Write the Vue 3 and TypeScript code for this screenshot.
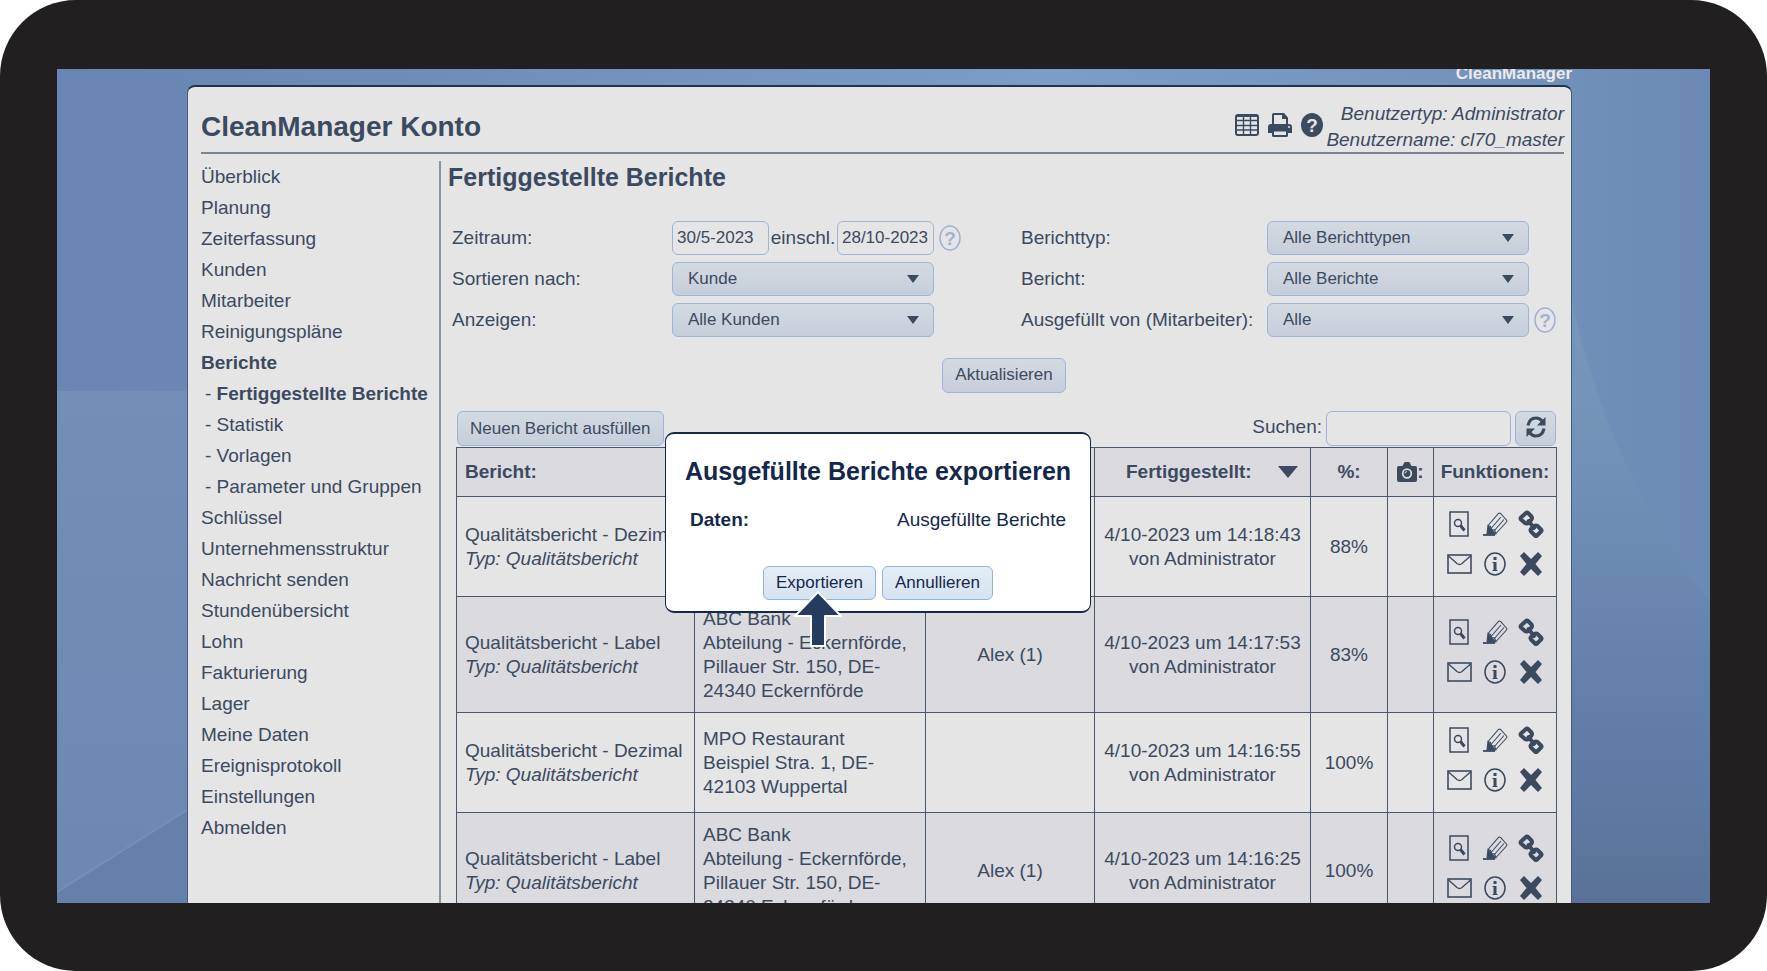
<script setup lang="ts">
import { ref } from 'vue'

interface NavItem {
  label: string
  sub?: boolean
  active?: boolean
}

interface Report {
  name: string
  type: string
  customer: string
  address: string
  employee: string
  date: string
  by: string
  score: string
}

const navItems: NavItem[] = [
  { label: 'Überblick' },
  { label: 'Planung' },
  { label: 'Zeiterfassung' },
  { label: 'Kunden' },
  { label: 'Mitarbeiter' },
  { label: 'Reinigungspläne' },
  { label: 'Berichte', active: true },
  { label: 'Fertiggestellte Berichte', sub: true, active: true },
  { label: 'Statistik', sub: true },
  { label: 'Vorlagen', sub: true },
  { label: 'Parameter und Gruppen', sub: true },
  { label: 'Schlüssel' },
  { label: 'Unternehmensstruktur' },
  { label: 'Nachricht senden' },
  { label: 'Stundenübersicht' },
  { label: 'Lohn' },
  { label: 'Fakturierung' },
  { label: 'Lager' },
  { label: 'Meine Daten' },
  { label: 'Ereignisprotokoll' },
  { label: 'Einstellungen' },
  { label: 'Abmelden' },
]

const bank = {
  customer: 'ABC Bank',
  address: 'Abteilung - Eckernförde, Pillauer Str. 150, DE-24340 Eckernförde',
  employee: 'Alex (1)',
}

const reports: Report[] = [
  {
    name: 'Qualitätsbericht - Dezimal',
    type: 'Qualitätsbericht',
    customer: '',
    address: '',
    employee: '',
    date: '4/10-2023 um 14:18:43',
    by: 'von Administrator',
    score: '88%',
  },
  {
    name: 'Qualitätsbericht - Label',
    type: 'Qualitätsbericht',
    ...bank,
    date: '4/10-2023 um 14:17:53',
    by: 'von Administrator',
    score: '83%',
  },
  {
    name: 'Qualitätsbericht - Dezimal',
    type: 'Qualitätsbericht',
    customer: 'MPO Restaurant',
    address: 'Beispiel Stra. 1, DE-42103 Wuppertal',
    employee: '',
    date: '4/10-2023 um 14:16:55',
    by: 'von Administrator',
    score: '100%',
  },
  {
    name: 'Qualitätsbericht - Label',
    type: 'Qualitätsbericht',
    ...bank,
    date: '4/10-2023 um 14:16:25',
    by: 'von Administrator',
    score: '100%',
  },
]

const from = ref('30/5-2023')
const until = ref('28/10-2023')
const search = ref('')
</script>

<template>
  <div class="device">
    <div class="screen">
      <svg class="backdrop" viewBox="0 0 1653 834" preserveAspectRatio="none" aria-hidden="true">
        <defs>
          <linearGradient id="sky" x1="0" y1="0" x2="1" y2="0">
            <stop offset="0" stop-color="#6985b3" />
            <stop offset="0.2" stop-color="#6e8cb7" />
            <stop offset="0.6" stop-color="#7b9dc8" />
            <stop offset="0.92" stop-color="#7190b9" />
            <stop offset="1" stop-color="#6b89b2" />
          </linearGradient>
          <linearGradient id="glow" x1="0" y1="0" x2="0" y2="1">
            <stop offset="0" stop-color="#7899bb" />
            <stop offset="0.35" stop-color="#7291b8" />
            <stop offset="0.6" stop-color="#6684ad" />
            <stop offset="0.8" stop-color="#5f7ba5" />
            <stop offset="1" stop-color="#5a7299" />
          </linearGradient>
          <linearGradient id="haze" x1="0" y1="0" x2="0" y2="1">
            <stop offset="0" stop-color="#728fb8" />
            <stop offset="1" stop-color="#6a88b1" />
          </linearGradient>
        </defs>
        <rect width="1653" height="834" fill="url(#sky)" />
        <path d="M0 322H700V834H0z" fill="url(#haze)" />
        <path d="M0 823L130 741L700 400V834H0z" fill="#6580ab" />
        <path d="M0 823L130 741" stroke="#7590b5" stroke-width="2" />
        <path d="M1500 160C1530 330 1575 430 1653 533V834H1400V160z" fill="url(#glow)" />
      </svg>

      <div class="brand">CleanManager</div>

      <div class="panel">
        <header class="top">
          <h1>CleanManager Konto</h1>
          <div class="tools">
            <button type="button" aria-label="Tabelle">
              <svg width="24" height="22" viewBox="0 0 24 22" fill="none" stroke="currentColor" stroke-width="2">
                <rect x="1" y="1" width="22" height="20" rx="2" />
                <path d="M1 6.500h22M1 11.500h22M1 16h22M8.500 3v18M15.500 3v18" stroke-width="1.400" />
                <path d="M2 2h20" />
              </svg>
            </button>
            <button type="button" aria-label="Drucken">
              <svg width="24" height="24" viewBox="0 0 24 24">
                <path d="M4 12V1.500Q4 0 5.500 0H16l4 4.500V12z" fill="currentColor" />
                <path d="M6 12V2h8v4h4v6z" fill="#e5e5e5" />
                <path d="M3 11h18q3 0 3 3v6h-4v-3H4v3H0v-6q0-3 3-3z" fill="currentColor" />
                <path d="M4 17h16v5.500q0 1.500-1.500 1.500h-13Q4 24 4 22.500z" fill="currentColor" />
                <path d="M6 18.500h12V22H6z" fill="#e5e5e5" />
                <circle cx="21" cy="14" r="1" fill="#e5e5e5" />
              </svg>
            </button>
            <button type="button" aria-label="Hilfe">
              <svg width="22" height="24" viewBox="0 0 22 24">
                <ellipse cx="11" cy="12" rx="11" ry="12" fill="currentColor" />
                <text x="11" y="19" text-anchor="middle" class="mark light">?</text>
              </svg>
            </button>
          </div>
          <div class="user">
            <div>Benutzertyp: Administrator</div>
            <div>Benutzername: cl70_master</div>
          </div>
        </header>

        <div class="body">
          <nav>
            <ul>
              <li v-for="item in navItems" :key="item.label" :class="{ sub: item.sub }">
                <template v-if="item.sub">- </template>
                <a href="#" :class="{ active: item.active }">{{ item.label }}</a>
              </li>
            </ul>
          </nav>

          <main>
            <h2>Fertiggestellte Berichte</h2>

            <form class="filters" @submit.prevent>
              <label for="from">Zeitraum:</label>
              <div class="field">
                <span class="range">
                  <input id="from" v-model="from" type="text" class="date" />
                  <label for="until">einschl.</label>
                  <input id="until" v-model="until" type="text" class="date" />
                </span>
                <svg class="help" width="22" height="26" viewBox="0 0 22 26">
                  <ellipse cx="11" cy="13" rx="10" ry="12" />
                  <text x="11" y="20" text-anchor="middle" class="mark">?</text>
                </svg>
              </div>
              <label for="type">Berichttyp:</label>
              <div class="field">
                <span class="drop">
                  <select id="type"><option>Alle Berichttypen</option></select>
                  <svg width="12" height="8" viewBox="0 0 12 8"><path d="M0 0h12L6 8z" /></svg>
                </span>
              </div>

              <label for="sort">Sortieren nach:</label>
              <div class="field">
                <span class="drop">
                  <select id="sort"><option>Kunde</option></select>
                  <svg width="12" height="8" viewBox="0 0 12 8"><path d="M0 0h12L6 8z" /></svg>
                </span>
              </div>
              <label for="report">Bericht:</label>
              <div class="field">
                <span class="drop">
                  <select id="report"><option>Alle Berichte</option></select>
                  <svg width="12" height="8" viewBox="0 0 12 8"><path d="M0 0h12L6 8z" /></svg>
                </span>
              </div>

              <label for="show">Anzeigen:</label>
              <div class="field">
                <span class="drop">
                  <select id="show"><option>Alle Kunden</option></select>
                  <svg width="12" height="8" viewBox="0 0 12 8"><path d="M0 0h12L6 8z" /></svg>
                </span>
              </div>
              <label for="staff">Ausgefüllt von (Mitarbeiter):</label>
              <div class="field">
                <span class="drop">
                  <select id="staff"><option>Alle</option></select>
                  <svg width="12" height="8" viewBox="0 0 12 8"><path d="M0 0h12L6 8z" /></svg>
                </span>
                <svg class="help" width="22" height="26" viewBox="0 0 22 26">
                  <ellipse cx="11" cy="13" rx="10" ry="12" />
                  <text x="11" y="20" text-anchor="middle" class="mark">?</text>
                </svg>
              </div>

              <div class="submit"><button type="submit" class="btn">Aktualisieren</button></div>
            </form>

            <div class="toolbar">
              <button type="button" class="btn">Neuen Bericht ausfüllen</button>
              <div class="search">
                <label for="search">Suchen:</label>
                <input id="search" v-model="search" type="text" />
                <button type="button" class="btn refresh" aria-label="Neu laden">
                  <svg width="20" height="22" viewBox="0 0 20 22">
                    <g fill="none" stroke="currentColor" stroke-width="3.200">
                      <path d="M2 9.500C3 4.500 6 2 10 2c3 0 5 1.500 6.500 3.500" />
                      <path d="M18 12.500C17 17.500 14 20 10 20c-3 0-5-1.500-6.500-3.500" />
                    </g>
                    <path d="M19.500 1v8.500H11zM.5 21v-8.500H9z" fill="currentColor" />
                  </svg>
                </button>
              </div>
            </div>

            <table>
              <colgroup>
                <col class="c-report" />
                <col class="c-place" />
                <col class="c-staff" />
                <col class="c-date" />
                <col class="c-score" />
                <col class="c-photo" />
                <col class="c-tools" />
              </colgroup>
              <thead>
                <tr>
                  <th class="left">Bericht:</th>
                  <th></th>
                  <th></th>
                  <th>
                    <button type="button" class="sort">
                      Fertiggestellt:
                      <svg width="20" height="12" viewBox="0 0 20 12"><path d="M0 0h20L10 12z" fill="currentColor" /></svg>
                    </button>
                  </th>
                  <th>%:</th>
                  <th>
                    <span class="photo">
                      <svg width="20" height="20" viewBox="0 0 20 20">
                        <path d="M2 4h3.500L7 1q.3-1 1.500-1h3q1.200 0 1.500 1l1.500 3H18q2 0 2 2v12q0 2-2 2H2q-2 0-2-2V6q0-2 2-2z" fill="currentColor" />
                        <circle cx="10" cy="11.500" r="4.300" fill="currentColor" stroke="#dadadf" stroke-width="1.800" />
                        <path d="M8 11.500q0-2 2-2" fill="none" stroke="#dadadf" />
                      </svg>:
                    </span>
                  </th>
                  <th>Funktionen:</th>
                </tr>
              </thead>
              <tbody>
                <tr v-for="r in reports" :key="r.date" :class="{ tall: r.employee }">
                  <td>
                    {{ r.name }}<br /><em>Typ: {{ r.type }}</em>
                  </td>
                  <td>
                    <template v-if="r.customer">{{ r.customer }}<br />{{ r.address }}</template>
                  </td>
                  <td class="mid">{{ r.employee }}</td>
                  <td class="mid">{{ r.date }}<br />{{ r.by }}</td>
                  <td class="mid">{{ r.score }}</td>
                  <td></td>
                  <td>
                    <div class="actions">
                      <button type="button" aria-label="Ansehen">
                        <svg width="24" height="26" viewBox="0 0 24 26" fill="none" stroke="currentColor">
                          <rect x="3" y="1" width="18" height="24" stroke-width="1.500" />
                          <circle cx="11" cy="12" r="3.500" stroke-width="1.500" />
                          <path d="M13.500 14.500l4 5" stroke-width="3" />
                        </svg>
                      </button>
                      <button type="button" aria-label="Bearbeiten">
                        <svg width="26" height="26" viewBox="0 0 26 26" fill="none" stroke="currentColor" stroke-width="1.100">
                          <path d="M6 14.500L16.500 2.500q1-1 2 0l6 6.500q.8 1 0 2L14 22.500" />
                          <path d="M9 17.500L19 6M12 20L22 8.500" />
                          <path d="M6 14.500l2.500 1 1 3 3 .5 1.500 3.500" />
                          <path d="M6 14.500l7.500 8.500H5z" fill="currentColor" />
                          <path d="M1 24h12" stroke-width="1.800" />
                        </svg>
                      </button>
                      <button type="button" aria-label="Verknüpfen">
                        <svg width="26" height="28" viewBox="0 0 26 28" fill="none" stroke="currentColor" stroke-linejoin="round" stroke-linecap="round">
                          <path d="M8 3Q9 2 10 3l3.500 3.500q1 1.500 0 3L10 13q-1.500 1-3 0L3 9.500Q2 8.500 3 7.500z" stroke-width="4" />
                          <path d="M16.500 16Q18 15 19.500 16l3.500 3.500q1 1 0 2L19 25.500q-1 1-2 0L13 21.500q-1-1.500 0-2.500z" stroke-width="4" />
                          <path d="M10.500 11l5.500 7" stroke-width="4" />
                        </svg>
                      </button>
                      <button type="button" aria-label="Senden">
                        <svg width="25" height="20" viewBox="0 0 25 20" fill="none" stroke="currentColor" stroke-width="1.600">
                          <rect x="1" y="1" width="23" height="18" />
                          <path d="M1.500 2L10 9.500q2.500 2 5 0L23.500 2" stroke-width="1.300" />
                        </svg>
                      </button>
                      <button type="button" aria-label="Information">
                        <svg width="22" height="24" viewBox="0 0 22 24" fill="none" stroke="currentColor">
                          <ellipse cx="11" cy="12" rx="10" ry="11" stroke-width="1.500" />
                          <path d="M11 5v3M11 10v9" stroke-width="3" />
                          <path d="M8.500 10.500H11M8.500 18.500h5" stroke-width="1" />
                        </svg>
                      </button>
                      <button type="button" aria-label="Löschen">
                        <svg width="22" height="24" viewBox="0 0 22 24">
                          <path d="M4 0l7 7 7-7 4 4-6.500 8 6.500 8-4 4-7-7-7 7-4-4 6.500-8L0 4z" fill="currentColor" />
                        </svg>
                      </button>
                    </div>
                  </td>
                </tr>
              </tbody>
            </table>
          </main>
        </div>

        <div class="overlay">
          <div class="dialog" role="dialog" aria-labelledby="dialog-title">
            <h2 id="dialog-title">Ausgefüllte Berichte exportieren</h2>
            <div class="pair"><b>Daten:</b><span>Ausgefüllte Berichte</span></div>
            <div class="choices">
              <button type="button" class="btn">Exportieren</button>
              <button type="button" class="btn">Annullieren</button>
            </div>
            <svg class="pointer" width="50" height="58" viewBox="0 0 50 58" aria-hidden="true">
              <path d="M25 2L48 26H32V56H18V26H2z" fill="#253c5f" stroke="#fff" stroke-width="2" stroke-linejoin="round" />
            </svg>
          </div>
        </div>
      </div>
    </div>
  </div>
</template>

<style>
body {
  margin: 0;
  background: #fff;
}
</style>

<style scoped>
* {
  box-sizing: border-box;
}
.device {
  height: 100vh;
  padding: 69px 57px 68px;
  background: #211f20;
  border-radius: 76px;
  font: 19px/24px "Liberation Sans", Arial, sans-serif;
  color: #3c4a60;
}
.screen {
  position: relative;
  display: flex;
  flex-direction: column;
  height: 100%;
  overflow: hidden;
}
.backdrop {
  position: absolute;
  inset: 0;
  width: 100%;
  height: 100%;
}
.brand {
  position: relative;
  flex: none;
  height: 16px;
  margin-right: 138px;
  font-size: 17px;
  line-height: 10px;
  font-weight: bold;
  text-align: right;
  color: #eaeaea;
}
.panel {
  position: relative;
  flex: 1;
  min-height: 0;
  margin: 0 138px 0 130px;
  padding-left: 13px;
  background: #e5e5e5;
  border: 1px solid #4a5c75;
  border-top: 2px solid #1e3350;
  border-bottom: 0;
  border-radius: 8px 8px 0 0;
}
h1,
h2 {
  margin: 0;
  font-size: 25px;
  line-height: 32px;
  white-space: nowrap;
}
button,
input,
select {
  font: inherit;
  color: inherit;
  margin: 0;
}
button {
  padding: 0;
  border: 0;
  background: none;
}
svg {
  display: block;
}
.top {
  display: flex;
  align-items: flex-start;
  height: 67px;
  margin-right: 7px;
  border-bottom: 2px solid #7a8495;
}
.top h1 {
  flex: 1;
  padding-top: 24px;
  font-size: 28px;
}
.tools {
  display: flex;
  align-items: center;
  gap: 9px;
  padding: 26px 3px 0 0;
}
.user {
  padding-top: 14px;
  line-height: 26px;
  font-style: italic;
  text-align: right;
  white-space: nowrap;
}
.mark {
  font: bold 19px "Liberation Sans", Arial, sans-serif;
  fill: #9fb2d2;
}
.light {
  fill: #e5e5e5;
}
.body {
  display: flex;
  margin-top: 7px;
}
nav {
  flex: none;
  width: 240px;
  min-height: 760px;
  border-right: 2px solid #8a94a3;
}
nav ul {
  margin: 0;
  padding: 0;
  list-style: none;
}
nav li {
  line-height: 31px;
  white-space: nowrap;
}
nav .sub {
  padding-left: 4px;
}
nav a {
  color: inherit;
  text-decoration: none;
}
nav .active {
  font-weight: bold;
}
main {
  flex: 1;
  min-width: 0;
  padding: 0 15px 0 7px;
}
.filters {
  display: grid;
  grid-template-columns: 220fr 349fr 246fr 289fr;
  grid-auto-rows: 34px;
  row-gap: 7px;
  align-items: center;
  margin-top: 28px;
  padding-left: 4px;
}
.filters label {
  white-space: nowrap;
}
.field {
  display: flex;
  align-items: center;
  gap: 5px;
}
.range {
  display: flex;
  align-items: center;
  justify-content: space-between;
  width: 262px;
}
input {
  height: 34px;
  padding: 0 4px;
  font-size: 17px;
  background: none;
  border: 1px solid #9fb4d6;
  border-radius: 6px;
}
.date {
  width: 97px;
}
.help {
  fill: none;
  stroke: #9fb2d2;
  stroke-width: 1.5;
}
.help .mark {
  fill: #9fb2d2;
  stroke: none;
}
.drop {
  position: relative;
  width: 262px;
}
.drop select {
  display: block;
  width: 100%;
  height: 34px;
  padding: 0 15px;
  appearance: none;
  font-size: 17px;
  background: linear-gradient(#d3dae1, #c7cedb);
  border: 1px solid #9fb4d6;
  border-radius: 6px;
}
.drop svg {
  position: absolute;
  right: 15px;
  top: 13px;
  fill: #3c4a60;
  pointer-events: none;
}
.btn {
  height: 35px;
  padding: 0 12px;
  font-size: 17px;
  background: linear-gradient(#d3dae1, #c7cedb);
  border: 1px solid #9fb4d6;
  border-radius: 6px;
}
.submit {
  grid-column: 1 / -1;
  margin-top: 28px;
  text-align: center;
}
.toolbar {
  display: flex;
  justify-content: space-between;
  margin: 33px 0 1px 9px;
}
.search {
  display: flex;
  gap: 4px;
}
.search label {
  line-height: 32px;
}
.search input {
  width: 185px;
  height: 35px;
}
.refresh {
  display: flex;
  justify-content: center;
  width: 41px;
  padding: 4px 0 0;
}
table {
  width: calc(100% - 8px);
  margin-left: 8px;
  table-layout: fixed;
  border-collapse: collapse;
}
.c-report { width: 238px; }
.c-place { width: 231px; }
.c-staff { width: 169px; }
.c-date { width: 216px; }
.c-score { width: 77px; }
.c-photo { width: 46px; }
.c-tools { width: 123px; }
th,
td {
  padding: 0 8px;
  border: 1px solid #4a586d;
}
th {
  height: 49px;
  padding: 0 4px;
  background: #dadadf;
}
td {
  height: 100px;
}
.tall td {
  height: 116px;
  background: #dadadf;
}
.left {
  padding-left: 8px;
  text-align: left;
}
.mid {
  padding: 0 4px;
  text-align: center;
}
.sort {
  display: flex;
  align-items: center;
  gap: 26px;
  margin-left: 27px;
  font-weight: bold;
}
.photo {
  display: flex;
  justify-content: center;
  align-items: center;
}
.actions {
  display: grid;
  grid-template-columns: repeat(3, 32px);
  grid-template-rows: 40px 40px;
  justify-content: center;
  column-gap: 4px;
  padding-bottom: 6px;
}
.actions button {
  display: flex;
  align-items: center;
  justify-content: center;
}
.overlay {
  position: absolute;
  top: 345px;
  left: 0;
  right: 3px;
  display: flex;
  justify-content: center;
}
.dialog {
  position: relative;
  width: 426px;
  padding: 21px 0 11px;
  color: #14284b;
  background: #fff;
  border: 1px solid #16294a;
  border-width: 2px 1px;
  border-radius: 9px;
}
.dialog h2 {
  text-align: center;
}
.pair {
  display: flex;
  justify-content: space-between;
  padding: 0 24px;
  margin-top: 21px;
}
.choices {
  display: flex;
  justify-content: center;
  gap: 6px;
  margin-top: 34px;
}
.choices .btn {
  height: 34px;
  background: linear-gradient(#e5edf6, #d5e3f2);
  border-color: #93b2e0;
}
.pointer {
  position: absolute;
  left: 127px;
  top: 156px;
}
</style>
